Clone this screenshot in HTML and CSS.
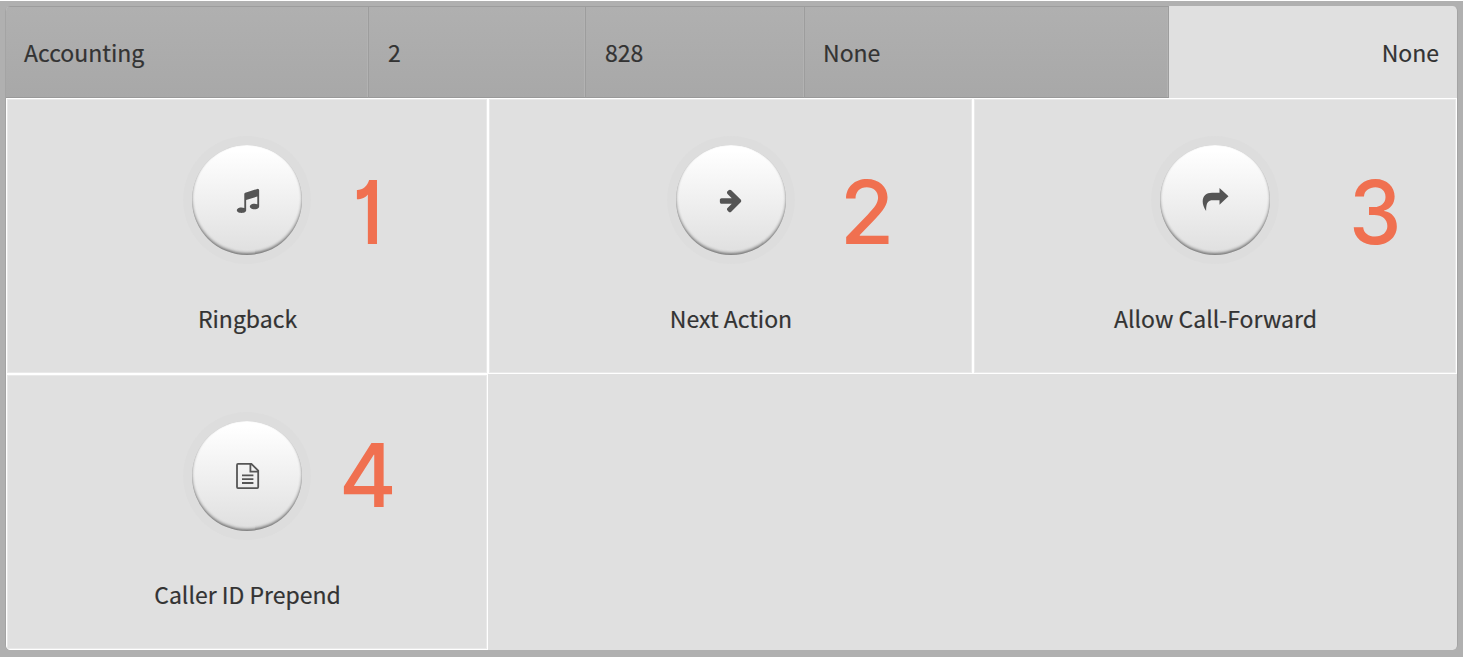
FILE: index.html
```html
<!DOCTYPE html>
<html lang="en">

<head>
    <meta charset="UTF-8">
    <meta name="viewport" content="width=device-width, initial-scale=1.0">
    <title>Groups</title>

    <link rel="stylesheet" href="styles.css">
</head>

<body>
    <main class="frame">
        <section class="panel">
            <header class="row">
                <div class="col col-name">Accounting</div>
                <div class="col col-members">2</div>
                <div class="col col-extension">828</div>
                <div class="col col-numbers">None</div>
                <div class="col-features">None</div>
            </header>

            <div class="features">
                <div class="feature">
                    <div class="halo">
                        <button class="circle" aria-label="Ringback">
                            <svg class="icon" viewBox="0 0 1792 1792">
                                <path d="M1664 224v1120q0 50-34 89t-86 60.5-103.5 32-96.5 10.5-96.5-10.5-103.5-32-86-60.5-34-89 34-89 86-60.5 103.5-32 96.5-10.5q105 0 192 39v-537l-768 237v709q0 50-34 89t-86 60.5-103.5 32-96.5 10.5-96.5-10.5-103.5-32-86-60.5-34-89 34-89 86-60.5 103.5-32 96.5-10.5q105 0 192 39v-967q0-31 19-56.5t49-35.5l832-256q12-4 28-4 40 0 68 28t28 68z"/>
                            </svg>
                        </button>
                    </div>
                    <div class="label">Ringback</div>
                    <span class="step step-1">1</span>
                </div>

                <div class="feature">
                    <div class="halo">
                        <button class="circle" aria-label="Next Action">
                            <svg class="icon" viewBox="0 0 1792 1792">
                                <path d="M1600 960q0 54-37 91l-651 651q-39 37-91 37-51 0-90-37l-75-75q-38-38-38-91t38-91l293-293h-704q-52 0-84.5-37.5t-32.5-90.5v-128q0-53 32.5-90.5t84.5-37.5h704l-293-294q-38-36-38-90t38-90l75-75q38-38 90-38 53 0 91 38l651 651q37 35 37 90z"/>
                            </svg>
                        </button>
                    </div>
                    <div class="label">Next Action</div>
                    <span class="step step-2">2</span>
                </div>

                <div class="feature">
                    <div class="halo">
                        <button class="circle" aria-label="Allow Call-Forward">
                            <svg class="icon" viewBox="0 0 26 26">
                                <path d="M16.5 1L25.5 9.3L16.5 17.7V13.3H10C5 13.3 3.2 15.5 3.1 24C.8 20.5 -.3 17.5 -.3 14.5C-.3 8.5 3.2 5.7 9 5.7H16.5Z"/>
                            </svg>
                        </button>
                    </div>
                    <div class="label">Allow Call-Forward</div>
                    <span class="step step-3">3</span>
                </div>

                <div class="feature">
                    <div class="halo">
                        <button class="circle" aria-label="Caller ID Prepend">
                            <svg class="icon icon-line" viewBox="0 0 26 26">
                                <path d="M3 .9H16.4L23.2 7.7V24.1Q23.2 25.1 22.2 25.1H3Q2 25.1 2 24.1V1.9Q2 .9 3 .9ZM15.4 .9V8.7H23.2M7 12.4H18.4M7 16.2H18.4M7 20H18.4"/>
                            </svg>
                        </button>
                    </div>
                    <div class="label">Caller ID Prepend</div>
                    <span class="step step-4">4</span>
                </div>
            </div>
        </section>
    </main>
</body>

</html>
```
FILE: styles.css
```css
* {
    box-sizing: border-box;
}

body {
    margin: 0;
    padding-top: 1px;
    background-color: #fff;
    color: #333;
    font-family: "Noto Sans CJK SC", sans-serif;
    font-size: 23px;
    line-height: 36px;
    -webkit-text-stroke: 0.2px #333;
}

.frame {
    width: 1463px;
    height: 656px;
    padding: 5px 5px 7px 5px;
    background-color: #b0b0b0;
}

.panel {
    height: 644px;
    background-color: #e0e0e0;
    border-left: 1px solid #a4a4a4;
    border-right: 1px solid #a4a4a4;
    border-radius: 5px;
    overflow: hidden;
}

.row {
    display: flex;
    height: 92px;
}

.col {
    display: flex;
    align-items: center;
    padding: 0 18px;
    background: linear-gradient(#b0b0b0, #a8a8a8);
    border-top: 1px solid #9d9d9d;
    border-bottom: 1px solid #999;
    border-right: 1px solid #9d9d9d;
    box-shadow: inset -1px 0 #b2b2b2;
}

.col-name {
    width: 363px;
}

.col-members {
    width: 217px;
    padding-left: 19px;
}

.col-extension {
    width: 219px;
    padding-left: 19px;
}

.col-numbers {
    width: 364px;
}

.col-features {
    flex: 1;
    display: flex;
    align-items: center;
    justify-content: flex-end;
    padding-right: 18px;
}

.features {
    display: grid;
    grid-template-columns: 482px 485px 484px;
    grid-template-rows: 276px 276px;
}

.feature {
    position: relative;
    display: flex;
    flex-direction: column;
    align-items: center;
    padding-top: 37px;
    border: 1px solid #fff;
    box-shadow: inset 0 0 0 1px #e9e9e9;
}

.halo {
    padding: 9px;
    border-radius: 50%;
    background-color: #dddddd;
}

.circle {
    display: flex;
    align-items: center;
    justify-content: center;
    width: 110px;
    height: 110px;
    padding: 0 0 0 1px;
    border: none;
    border-radius: 50%;
    background: linear-gradient(#fff 5%, #dfdfdf);
    box-shadow: inset 0 -2px 3px rgba(0, 0, 0, 0.45), inset 0 0 1px rgba(0, 0, 0, 0.15);
}

.icon {
    width: 26px;
    height: 26px;
    fill: #555;
    overflow: visible;
}

.icon-line {
    fill: none;
    stroke: #555;
    stroke-width: 1.8;
}

.label {
    margin-top: 36px;
    padding-left: 1px;
}

/* step numbers drawn over the cells */
.step {
    position: absolute;
    color: #f07050;
    font-family: Inter, sans-serif;
    font-size: 88px;
    font-weight: 500;
    line-height: 88px;
    font-feature-settings: "cv01";
    -webkit-text-stroke: 0;
    transform-origin: left;
}

.step-1 {
    left: 346px;
    top: 69px;
    transform: scaleX(0.8);
    font-weight: 600;
}

.step-2 {
    left: 351px;
    top: 69px;
}

.step-3 {
    left: 375px;
    top: 69px;
    transform: scaleX(0.95);
}

.step-4 {
    left: 332px;
    top: 56px;
}
```
